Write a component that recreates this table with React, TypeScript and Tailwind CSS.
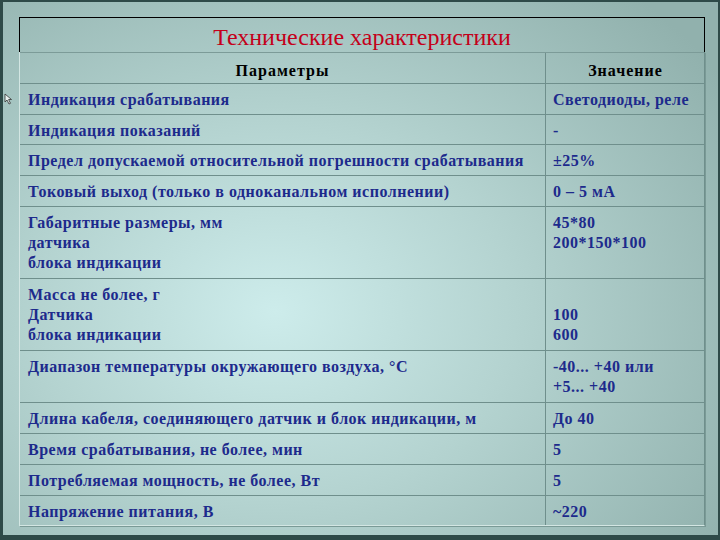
const rows: { param: string[]; value: string[]; h: string }[] = [
  { param: ['Индикация срабатывания'], value: ['Светодиоды, реле'], h: 'h-[31px]' },
  { param: ['Индикация показаний'], value: ['-'], h: 'h-[30px]' },
  {
    param: ['Предел допускаемой относительной погрешности срабатывания'],
    value: ['±25%'],
    h: 'h-[31px]',
  },
  { param: ['Токовый выход (только в одноканальном исполнении)'], value: ['0 – 5 мА'], h: 'h-[31px]' },
  {
    param: ['Габаритные размеры, мм', 'датчика', 'блока индикации'],
    value: ['45*80', '200*150*100'],
    h: 'h-[72px]',
  },
  {
    param: ['Масса не более, г', 'Датчика', 'блока индикации'],
    value: ['\u00a0', '100', '600'],
    h: 'h-[72px]',
  },
  {
    param: ['Диапазон температуры окружающего воздуха, °С'],
    value: ['-40... +40 или', '+5... +40'],
    h: 'h-[52px]',
  },
  {
    param: ['Длина кабеля, соединяющего датчик и блок индикации, м'],
    value: ['До 40'],
    h: 'h-[31px]',
  },
  { param: ['Время срабатывания, не более, мин'], value: ['5'], h: 'h-[31px]' },
  { param: ['Потребляемая мощность, не более, Вт'], value: ['5'], h: 'h-[31px]' },
  { param: ['Напряжение питания, В'], value: ['~220'], h: 'h-[30px]' },
];

export default function App() {
  return (
    <div
      className="relative w-[720px] h-[540px] overflow-hidden border-l-[3px] border-t-[2px] border-r-[2px] border-b-[5px] border-[#2e4a48] bg-[radial-gradient(ellipse_75%_80%_at_38%_58%,#cdeceb_0%,#b4d3d0_45%,#91b1ad_100%)] pl-[16px] pt-[15px] font-['Liberation_Serif',serif]"
    >
      <svg className="absolute left-[1px] top-[91px]" width="10" height="12" viewBox="0 0 10 12">
        <path d="M1 1 L1 9 L3 7 L5 11 L6.5 10.3 L4.6 6.5 L7.5 6.5 Z" fill="#e8f0ef" stroke="#333" strokeWidth="0.8" />
      </svg>

      <div className="w-[686px]">
        <div className="h-[35px] border border-b-0 border-black flex items-center justify-center text-[24px] leading-none text-[#c4001a] pt-[3px]">
          Технические характеристики
        </div>

        <div className="border-l border-b border-l-[#d3e6e3] border-b-[#d3e6e3] border-r border-r-[#6f8f8c] shadow-[1px_1px_0_#7a9a96]">
          <div className="grid grid-cols-[525px_160px] h-[31px] border-t border-[#7c9b98] text-[16px] tracking-[1px] font-bold text-black">
            <div className="flex items-center justify-center pt-[5px]">Параметры</div>
            <div className="flex items-center justify-center pt-[5px] border-l border-[#6f8f8c]">Значение</div>
          </div>

          {rows.map((r, i) => (
            <div
              key={i}
              className={`grid grid-cols-[525px_160px] ${r.h} border-t border-[#6f8f8c] text-[16px] leading-[20px] tracking-[0.5px] font-bold text-[#1d2a8c]`}
            >
              <div className="pl-[8px] pt-[6px] whitespace-nowrap">
                {r.param.map((t, j) => (
                  <div key={j}>{t}</div>
                ))}
              </div>
              <div className="pl-[7px] pt-[6px] border-l border-[#6f8f8c] whitespace-nowrap">
                {r.value.map((t, j) => (
                  <div key={j}>{t}</div>
                ))}
              </div>
            </div>
          ))}
        </div>
      </div>
    </div>
  );
}
